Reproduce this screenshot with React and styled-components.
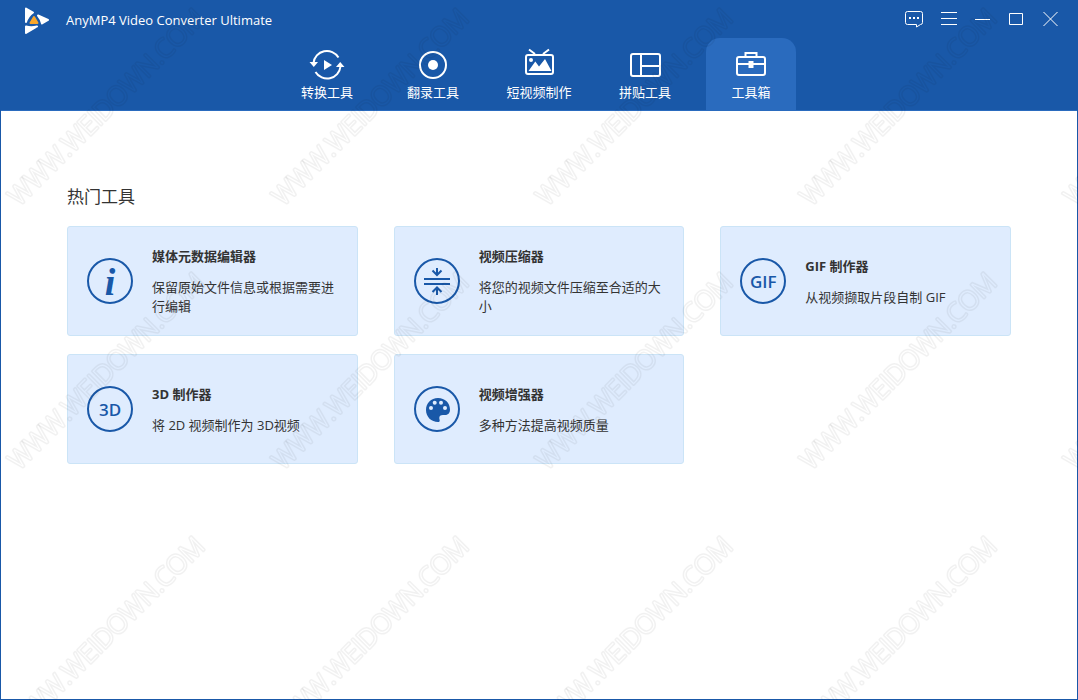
import React, { useState } from 'react';
import styled, { createGlobalStyle, ThemeProvider } from 'styled-components';

const theme = {
  blue: '#1958a8',
  blueLight: '#2a6bbe',
  card: '#dfecfe',
  cardBorder: '#cbe4f7',
  text: '#333333',
  white: '#ffffff',
  fontFamily: '"Open Sans", "Noto Sans CJK SC", sans-serif',
};

const GlobalStyle = createGlobalStyle`
  * {
    box-sizing: border-box;
  }
  body {
    margin: 0;
    font-family: ${({ theme }) => theme.fontFamily};
    font-size: 13px;
    color: ${({ theme }) => theme.text};
  }
  button {
    margin: 0;
    padding: 0;
    border: 0;
    background: none;
    font: inherit;
    color: inherit;
    cursor: pointer;
  }
  h1, h2, h3, p {
    margin: 0;
    font-weight: 400;
  }
`;

const Window = styled.div`
  position: relative;
  display: flex;
  flex-direction: column;
  min-height: 100vh;
  border: 1px solid ${({ theme }) => theme.blue};
  background-color: ${({ theme }) => theme.white};
`;

const Header = styled.header`
  color: ${({ theme }) => theme.white};
  background-color: ${({ theme }) => theme.blue};
  border-bottom: 1px solid ${({ theme }) => theme.blueLight};
`;

const TitleBar = styled.div`
  display: flex;
  align-items: center;
  height: 37px;
  padding: 0 10px 0 22px;
`;

const AppTitle = styled.h1`
  flex: 1;
  margin-left: 15px;
  font-size: 13px;
  line-height: 20px;
`;

const WindowControls = styled.div`
  display: flex;

  svg {
    display: block;
  }
`;

const Tabs = styled.nav`
  display: flex;
  justify-content: center;
  gap: 16px;
`;

const Tab = styled.button`
  display: flex;
  flex-direction: column;
  align-items: center;
  gap: 2px;
  width: 90px;
  padding: 10px 0 8px;
  border-radius: 14px 14px 0 0;
  line-height: 20px;
  white-space: nowrap;
  background-color: ${({ theme, $active }) => ($active ? theme.blueLight : 'transparent')};
`;

const Main = styled.main`
  flex: 1;
  padding: 74px 66px 40px;
`;

const Heading = styled.h2`
  margin-bottom: 17px;
  font-size: 17px;
  line-height: 24px;
`;

const ToolGrid = styled.div`
  display: grid;
  grid-template-columns: repeat(3, 1fr);
  gap: 18px 36px;
`;

const Card = styled.button`
  display: flex;
  align-items: center;
  gap: 19px;
  min-height: 110px;
  padding: 0 19px;
  text-align: left;
  border: 1px solid ${({ theme }) => theme.cardBorder};
  border-radius: 3px;
  background-color: ${({ theme }) => theme.card};
`;

const Badge = styled.span`
  flex: none;
  display: flex;
  align-items: center;
  justify-content: center;
  width: 46px;
  height: 46px;
  border: 2px solid ${({ theme }) => theme.blue};
  border-radius: 50%;
  font-size: 17px;
  font-weight: 600;
  color: ${({ theme }) => theme.blue};
`;

const InfoMark = styled.em`
  padding-top: 2px;
  font-family: "Liberation Serif", serif;
  font-size: 38px;
  line-height: 40px;
`;

const CardTitle = styled.h3`
  margin-bottom: 12px;
  font-size: 13px;
  font-weight: 700;
  line-height: 20px;
`;

const CardText = styled.p`
  line-height: 19px;
`;

const WatermarkLayer = styled.svg`
  position: absolute;
  inset: -1px;
  width: calc(100% + 2px);
  height: calc(100% + 2px);
  pointer-events: none;

  text {
    font-family: "Open Sans", sans-serif;
    font-size: 26px;
    font-weight: 300;
    stroke-linejoin: round;
  }
`;

const Logo = () => (
  <svg width="28" height="29" viewBox="0 0 28 29" aria-hidden="true">
    <g fill="#fff" stroke="#fff" strokeWidth="2" strokeLinejoin="round">
      <path d="M3 3.500 L10 7.500 Q5 11 3 17 Z" />
      <path d="M15 10.500 L25 15 L19 18.500 Q18 14 15 10.500 Z" />
      <path d="M3 21.500 Q8 23 14 21.500 L3 28 Z" />
    </g>
    <path d="M11 12 L14.500 18 H7.500 Z" fill="#f9a72b" stroke="#f9a72b" strokeWidth="2" strokeLinejoin="round" />
  </svg>
);

const ControlIcon = ({ children }) => (
  <svg width="34" height="37" viewBox="0 0 34 37" fill="none" stroke="currentColor" aria-hidden="true">
    {children}
  </svg>
);

const TabIcon = ({ children }) => (
  <svg width="36" height="32" viewBox="0 0 36 32" fill="none" stroke="currentColor" strokeWidth="2" aria-hidden="true">
    {children}
  </svg>
);

const controls = [
  {
    label: '反馈',
    icon: (
      <>
        <path d="M10.500 10.500 H23.500 Q25.500 10.500 25.500 12.500 V21.500 Q25.500 23.500 23.500 23.500 L19.500 26 V23.500 H10.500 Q8.500 23.500 8.500 21.500 V12.500 Q8.500 10.500 10.500 10.500 Z" />
        <path d="M12 17 H22" strokeWidth="2" strokeDasharray="2 2" />
      </>
    ),
  },
  { label: '菜单', icon: <path d="M10 11.500 H26 M10 17.500 H26 M10 23.500 H26" /> },
  { label: '最小化', icon: <path d="M10 18.500 H25" /> },
  { label: '最大化', icon: <path d="M10.500 12.500 H23.500 V23.500 H10.500 Z" /> },
  { label: '关闭', icon: <path d="M10.500 11 L24.500 25 M24.500 11 L10.500 25" /> },
];

const tabs = [
  {
    label: '转换工具',
    icon: (
      <>
        <path d="M4.500 15 A13.500 13.500 0 0 1 29.500 9.500 M6.500 24 A13.500 13.500 0 0 0 31.500 18.500" />
        <path d="M0.500 14 H9 L4.800 19 Z M27 19 H35.500 L31.200 14 Z M15 12 V22 L23 17 Z" fill="currentColor" stroke="none" />
      </>
    ),
  },
  {
    label: '翻录工具',
    icon: (
      <>
        <circle cx="18" cy="17" r="13" />
        <circle cx="18" cy="17" r="5" fill="currentColor" stroke="none" />
      </>
    ),
  },
  {
    label: '短视频制作',
    icon: (
      <>
        <rect x="5" y="7" width="27" height="19" rx="2" />
        <path d="M8 1.500 L14 6 M28 1.500 L22 6" />
        <circle cx="10" cy="12" r="2" fill="currentColor" stroke="none" />
        <path d="M7.500 23 L14.300 13.500 L18 18.500 L24 11 L30.500 23 Z" fill="currentColor" stroke="none" />
      </>
    ),
  },
  {
    label: '拼贴工具',
    icon: (
      <>
        <rect x="4" y="6" width="29" height="22" rx="2" />
        <path d="M14 6 V28 M14 18 H33" />
      </>
    ),
  },
  {
    label: '工具箱',
    icon: (
      <>
        <rect x="4" y="9" width="28" height="18" rx="2" />
        <path d="M12.500 9 V5 H23.500 V9 M4 16 H32" />
        <path d="M15.500 13 H20.500 V20 H15.500 Z" fill="currentColor" stroke="none" />
      </>
    ),
  },
];

const CompressIcon = () => (
  <svg width="42" height="42" viewBox="2 2 42 42" fill="none" stroke="currentColor" strokeWidth="2" aria-hidden="true">
    <path d="M10 21 H36 M10 26 H36 M23 10 V17 M18.500 12.500 L23 17 L27.500 12.500 M23 37 V29.500 M18.500 34 L23 29.500 L27.500 34" />
  </svg>
);

const PaletteIcon = () => (
  <svg width="42" height="42" viewBox="2 2 42 42" fill="currentColor" aria-hidden="true">
    <path d="M24 12 C17 12 12 17 12 24 C12 31 17.500 36 24 36 C26.500 36 25.600 34 25.300 32.500 C25 30 26.500 29 29 29 H31 C34.500 29 36 26.500 36 23.500 C36 17 31 12 24 12 Z" />
    <g fill="#dfecfe">
      <circle cx="20.700" cy="16.700" r="2" />
      <circle cx="27" cy="16.700" r="2" />
      <circle cx="17" cy="22" r="2" />
      <circle cx="31" cy="22" r="2" />
    </g>
  </svg>
);

const tools = [
  { title: '媒体元数据编辑器', text: '保留原始文件信息或根据需要进行编辑', badge: <InfoMark>i</InfoMark> },
  { title: '视频压缩器', text: '将您的视频文件压缩至合适的大小', badge: <CompressIcon /> },
  { title: 'GIF 制作器', text: '从视频撷取片段自制 GIF', badge: 'GIF' },
  { title: '3D 制作器', text: '将 2D 视频制作为 3D视频', badge: '3D' },
  { title: '视频增强器', text: '多种方法提高视频质量', badge: <PaletteIcon /> },
];

// the mask cuts the letters out, so only their outline stays visible
const Watermark = () => (
  <WatermarkLayer aria-hidden="true">
    <defs>
      <mask id="outline" maskUnits="userSpaceOnUse" x="-10" y="-40" width="320" height="60">
        <rect x="-10" y="-40" width="320" height="60" fill="#fff" />
        <text fill="#000">WWW.WEIDOWN.COM</text>
      </mask>
      <pattern id="watermark" width="264" height="264" patternUnits="userSpaceOnUse">
        <g transform="translate(19 207) rotate(-45)">
          <text fill="none" stroke="#000" strokeWidth="3" strokeOpacity="0.055" mask="url(#outline)">
            WWW.WEIDOWN.COM
          </text>
        </g>
      </pattern>
    </defs>
    <rect width="100%" height="100%" fill="url(#watermark)" />
  </WatermarkLayer>
);

const App = () => {
  const [activeTab, setActiveTab] = useState('工具箱');

  return (
    <ThemeProvider theme={theme}>
      <GlobalStyle />
      <Window>
        <Header>
          <TitleBar>
            <Logo />
            <AppTitle>AnyMP4 Video Converter Ultimate</AppTitle>
            <WindowControls>
              {controls.map(({ label, icon }) => (
                <button key={label} type="button" aria-label={label}>
                  <ControlIcon>{icon}</ControlIcon>
                </button>
              ))}
            </WindowControls>
          </TitleBar>
          <Tabs>
            {tabs.map(({ label, icon }) => (
              <Tab key={label} type="button" $active={label === activeTab} onClick={() => setActiveTab(label)}>
                <TabIcon>{icon}</TabIcon>
                {label}
              </Tab>
            ))}
          </Tabs>
        </Header>
        <Main>
          <Heading>热门工具</Heading>
          <ToolGrid>
            {tools.map(({ title, text, badge }) => (
              <Card key={title} type="button">
                <Badge>{badge}</Badge>
                <div>
                  <CardTitle>{title}</CardTitle>
                  <CardText>{text}</CardText>
                </div>
              </Card>
            ))}
          </ToolGrid>
        </Main>
        <Watermark />
      </Window>
    </ThemeProvider>
  );
};

export default App;
